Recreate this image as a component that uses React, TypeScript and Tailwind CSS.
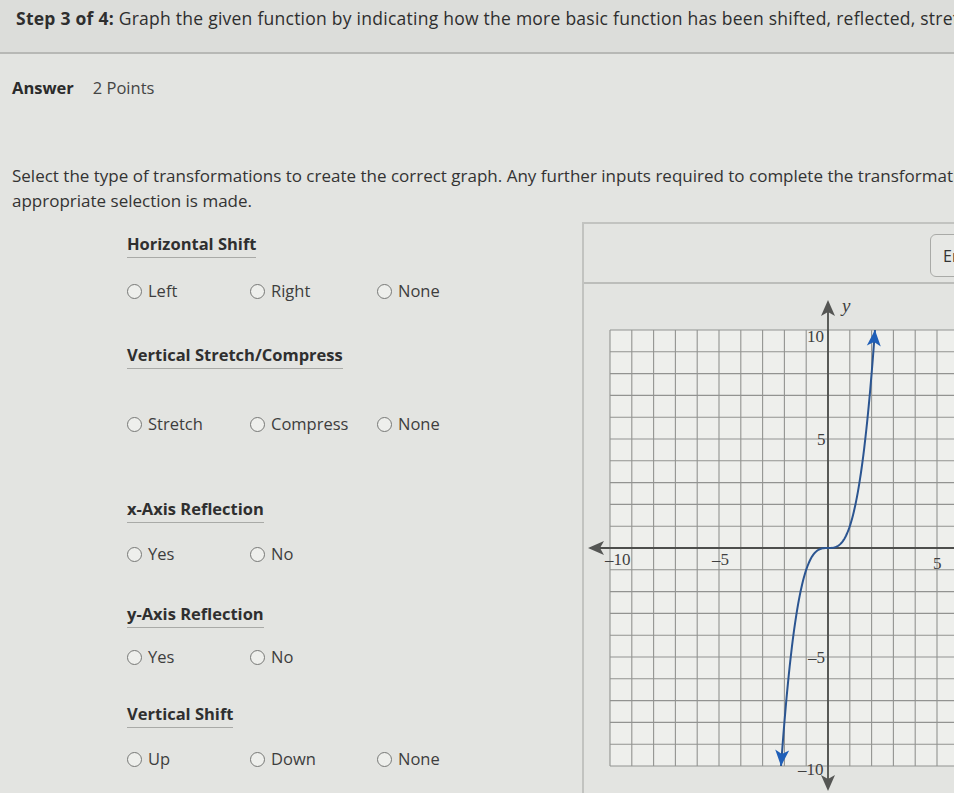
import React from "react";

const UNIT = 21.8;
const OX = 244;
const OY = 264;

const px = (x: number) => OX + x * UNIT;
const py = (y: number) => OY - y * UNIT;

const Radio = ({ label }: { label: string }) => (
  <div className="flex items-center h-[22px]">
    <span className="w-[15px] h-[15px] rounded-full border-[1.5px] border-[#777876] bg-[#eeefec]" />
    <span className="ml-[6px] text-[16.5px] text-[#3d3d3d]">{label}</span>
  </div>
);

const Heading = ({ text, className }: { text: string; className?: string }) => (
  <div className={className}>
    <span className="inline-block font-bold text-[16.5px] leading-[22px] text-[#2f2f2f] pb-[2px] border-b border-[#a9aaa7]">
      {text}
    </span>
  </div>
);

const Graph = () => {
  // y = x^3 between the two arrow heads
  const end = Math.cbrt(10);
  const pts: string[] = [];
  for (let i = 0; i <= 120; i++) {
    const x = -end + (2 * end * i) / 120;
    pts.push(`${px(x).toFixed(2)},${py(x * x * x).toFixed(2)}`);
  }
  const curve = "M" + pts.join(" L");
  const tilt = (Math.atan(1 / (3 * end * end)) * 180) / Math.PI;

  const vLines = [];
  for (let k = -10; k <= 6; k++) vLines.push(px(k));
  const hLines = [];
  for (let k = -10; k <= 10; k++) hLines.push(py(k));

  return (
    <svg width="372" height="511" viewBox="0 0 372 511" className="block">
      <rect x={px(-10)} y={py(10)} width={372 - px(-10)} height={20 * UNIT} fill="#eeefec" />
      {vLines.map((x, i) => (
        <line key={"v" + i} x1={x} y1={py(10)} x2={x} y2={py(-10)} stroke="#929391" strokeWidth="1.1" />
      ))}
      {hLines.map((y, i) => (
        <line key={"h" + i} x1={px(-10)} y1={y} x2={372} y2={y} stroke="#929391" strokeWidth="1.1" />
      ))}

      {/* axes */}
      <line x1={6} y1={OY} x2={372} y2={OY} stroke="#4d4e4c" strokeWidth="1.8" />
      <line x1={OX} y1={20} x2={OX} y2={503} stroke="#4d4e4c" strokeWidth="1.8" />
      <path d={`M4,${OY} L20,${OY - 7} L16,${OY} L20,${OY + 7} Z`} fill="#555654" />
      <path d={`M${OX},16 L${OX - 7},32 L${OX},28 L${OX + 7},32 Z`} fill="#555654" />
      <path d={`M${OX},507 L${OX - 7},491 L${OX},495 L${OX + 7},491 Z`} fill="#555654" />

      {/* labels */}
      <g fontFamily="'Liberation Serif', serif" fontSize="17" fill="#3f3f3f">
        <text x={OX - 21} y={py(10) + 12}>10</text>
        <text x={OX - 11} y={py(5) + 6}>5</text>
        <text x={OX - 20} y={py(-5) + 6}>–5</text>
        <text x={OX - 30} y={py(-10) + 9}>–10</text>
        <text x={px(-10) - 5} y={OY + 17}>–10</text>
        <text x={px(-5) - 7} y={OY + 17}>–5</text>
        <text x={px(5) - 4} y={OY + 21}>5</text>
        <text x={OX + 14} y={28} fontStyle="italic" fontSize="19">y</text>
      </g>

      {/* curve */}
      <path d={curve} fill="none" stroke="#2b5591" strokeWidth="2" />
      <g transform={`translate(${px(end)},${py(10)}) rotate(${tilt})`}>
        <path d="M0,0 L-7,16 L0,12 L7,16 Z" fill="#1f5fb8" />
      </g>
      <g transform={`translate(${px(-end)},${py(-10)}) rotate(${180 + tilt})`}>
        <path d="M0,0 L-7,16 L0,12 L7,16 Z" fill="#1f5fb8" />
      </g>
    </svg>
  );
};

export default function App() {
  return (
    <div className="w-[954px] h-[793px] overflow-hidden bg-[#e3e4e1] text-[#333] font-['Open_Sans',sans-serif]">
      <div className="h-[54px] border-b-2 border-[#b7b8b5] bg-[#dcddda] pl-4 pt-[6px] whitespace-nowrap overflow-hidden text-[17.5px] tracking-[0.25px] leading-[24px] text-[#2e2e2e]">
        <span className="font-bold">Step 3 of 4:</span> Graph the given function by indicating how the more basic function has been shifted, reflected, stretched, or compressed.
      </div>

      <div className="flex items-center pl-3 mt-[22px] h-[24px] text-[16.5px]">
        <span className="font-bold text-[#2b2b2b]">Answer</span>
        <span className="ml-[19px] text-[#444]">2 Points</span>
      </div>

      <div className="pl-3 mt-[63px] text-[17px] leading-[25px] text-[#333] whitespace-nowrap overflow-hidden">
        <div>
          Select the type of transformations to create the correct graph. Any further inputs required to complete the transformation will appear once the
        </div>
        <div>appropriate selection is made.</div>
      </div>

      <div className="flex mt-[9px] h-[572px]">
        <div className="w-[582px] pl-[127px]">
          <Heading text="Horizontal Shift" className="mt-[10px]" />
          <div className="grid grid-cols-[123px_127px_auto] mt-[22px]">
            <Radio label="Left" />
            <Radio label="Right" />
            <Radio label="None" />
          </div>

          <Heading text="Vertical Stretch/Compress" className="mt-[41px]" />
          <div className="grid grid-cols-[123px_127px_auto] mt-[44px]">
            <Radio label="Stretch" />
            <Radio label="Compress" />
            <Radio label="None" />
          </div>

          <Heading text="x-Axis Reflection" className="mt-[62px]" />
          <div className="grid grid-cols-[123px_127px_auto] mt-[20px]">
            <Radio label="Yes" />
            <Radio label="No" />
          </div>

          <Heading text="y-Axis Reflection" className="mt-[37px]" />
          <div className="grid grid-cols-[123px_127px_auto] mt-[18px]">
            <Radio label="Yes" />
            <Radio label="No" />
          </div>

          <Heading text="Vertical Shift" className="mt-[34px]" />
          <div className="grid grid-cols-[123px_127px_auto] mt-[20px]">
            <Radio label="Up" />
            <Radio label="Down" />
            <Radio label="None" />
          </div>
        </div>

        <div className="flex-1 border-l-2 border-t-2 border-[#c2c3c0] overflow-hidden">
          <div className="h-[60px] border-b-2 border-[#bcbdba] relative">
            <button className="absolute left-[346px] top-[10px] h-[43px] px-3 rounded-md border border-[#a9aaa7] bg-[#e7e8e5] text-[16px] text-[#333] whitespace-nowrap">
              Enable Zoom/Pan
            </button>
          </div>
          <Graph />
        </div>
      </div>
    </div>
  );
}
